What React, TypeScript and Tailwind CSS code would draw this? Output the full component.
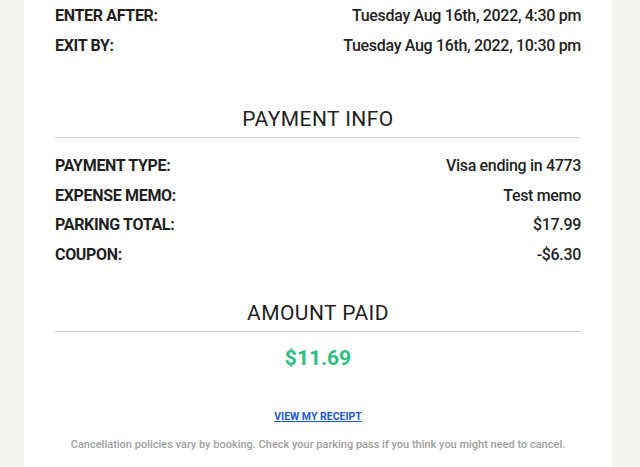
const font = { fontFamily: "Roboto, 'Liberation Sans', sans-serif" };

function Row({ label, value }: { label: string; value: string }) {
  return (
    <div className="flex items-center justify-between text-[16px] leading-[29.6px] tracking-[-0.02em] text-[#1f1f1f]">
      <span className="font-bold">{label}</span>
      <span className="font-medium">{value}</span>
    </div>
  );
}

function Heading({ children }: { children: string }) {
  return (
    <div className="border-b border-[#cfcfcf] pb-[4px] text-center text-[21px] leading-[28px] tracking-[0.02em] text-[#1f1f1f]">
      {children}
    </div>
  );
}

export default function App() {
  return (
    <div className="min-h-screen bg-[#f3f3ef]" style={font}>
      <div className="ml-[24px] w-[588px] bg-white px-[31px] pt-[1px] pb-[20px]">
        <Row label="ENTER AFTER:" value="Tuesday Aug 16th, 2022, 4:30 pm" />
        <Row label="EXIT BY:" value="Tuesday Aug 16th, 2022, 10:30 pm" />

        <div className="mt-[45px]">
          <Heading>PAYMENT INFO</Heading>
        </div>
        <div className="mt-[13px]">
          <Row label="PAYMENT TYPE:" value="Visa ending in 4773" />
          <Row label="EXPENSE MEMO:" value="Test memo" />
          <Row label="PARKING TOTAL:" value="$17.99" />
          <Row label="COUPON:" value="-$6.30" />
        </div>

        <div className="mt-[29px]">
          <Heading>AMOUNT PAID</Heading>
        </div>
        <div className="mt-[12px] text-center text-[21px] font-bold leading-[28px] text-[#2bbf85]">
          $11.69
        </div>

        <div className="mt-[37px] text-center text-[10.5px] leading-[16px]">
          <a href="#" className="font-bold text-[#1a56db] underline">
            VIEW MY RECEIPT
          </a>
        </div>
        <p className="mt-[12px] text-center text-[11px] font-medium leading-[16px] text-[#a0a0a0]">
          Cancellation policies vary by booking. Check your parking pass if you think you might need to cancel.
        </p>
      </div>
    </div>
  );
}
